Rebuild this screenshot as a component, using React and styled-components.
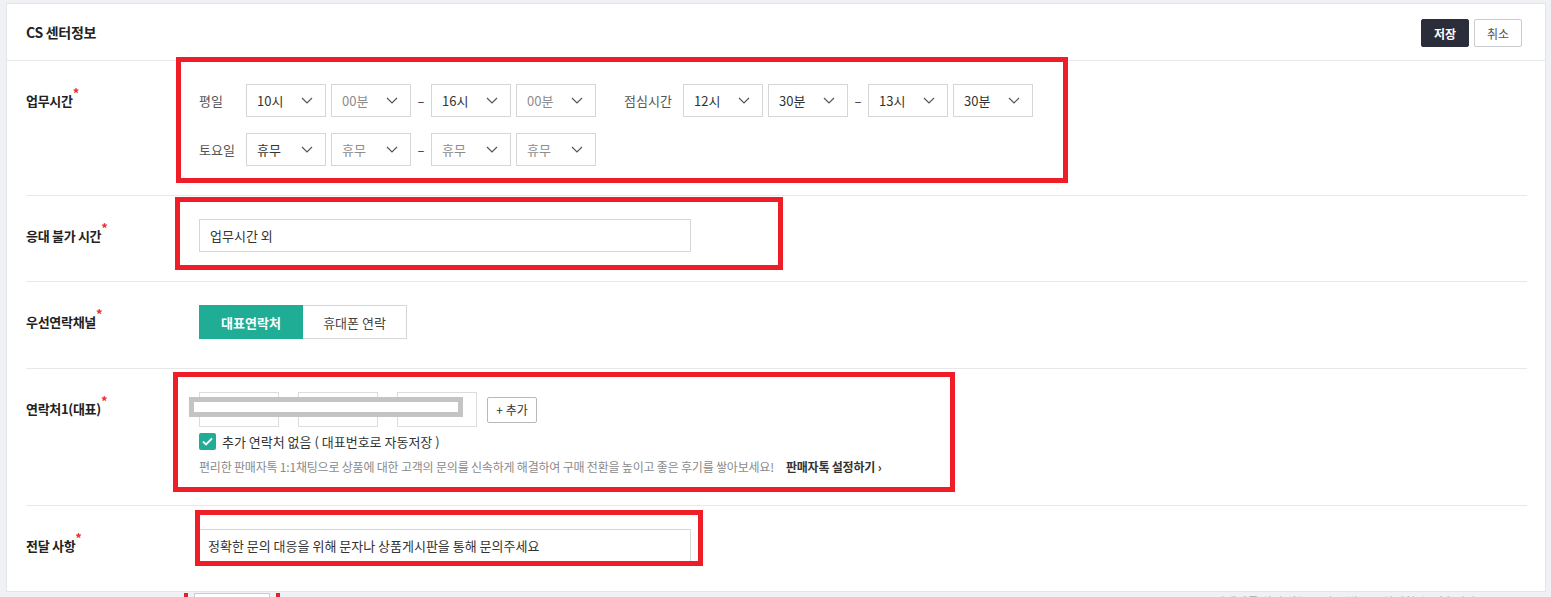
import React from 'react';
import styled, { createGlobalStyle } from 'styled-components';

const GlobalStyle = createGlobalStyle`
  html, body {
    margin: 0;
    padding: 0;
    background: #eff1f4;
    height: 597px;
    overflow: hidden;
  }
  body {
    font-family: "Noto Sans CJK KR", "Noto Sans", sans-serif;
    color: #333;
  }
`;

const Page = styled.div`
  padding: 3px 5px 0 6px;
`;

const Card = styled.section`
  position: relative;
  background: #fff;
  border: 1px solid #e3e5e8;
  height: 587px;
`;

const Header = styled.header`
  height: 56px;
  border-bottom: 1px solid #e8e9eb;
  display: flex;
  align-items: center;
  justify-content: space-between;
  padding: 0 23px 0 19px;
`;

const Title = styled.h1`
  margin: 0;
  font-size: 14px;
  font-weight: 700;
  color: #222;
  letter-spacing: -0.3px;
`;

const ButtonGroup = styled.div`
  display: flex;
  gap: 5px;
  margin-top: 2px;
`;

const HeaderButton = styled.button`
  width: 48px;
  height: 28px;
  border-radius: 2px;
  font-family: inherit;
  font-size: 12px;
  cursor: pointer;
  border: 1px solid ${p => (p.$primary ? '#2b2d3b' : '#c9cbcf')};
  background: ${p => (p.$primary ? '#2b2d3b' : '#fff')};
  color: ${p => (p.$primary ? '#fff' : '#555')};
  font-weight: ${p => (p.$primary ? 700 : 400)};
`;

const Body = styled.div`
  padding: 0 18px 0 19px;
`;

const Row = styled.div`
  display: flex;
  padding: 23px 0 29px;
  border-bottom: ${p => (p.$last ? 'none' : '1px solid #e7e8ea')};
`;

const Label = styled.div`
  width: 173px;
  flex: none;
  height: 33px;
  display: flex;
  align-items: center;
  font-size: 13px;
  font-weight: 700;
  color: #222;
  letter-spacing: -0.3px;
`;

const Star = styled.span`
  color: #e8312f;
  font-size: 13px;
  align-self: flex-start;
  margin-top: 2px;
  line-height: 13px;
`;

const Content = styled.div`
  display: flex;
  flex-direction: column;
  gap: ${p => p.$gap || 0}px;
`;

const Line = styled.div`
  display: flex;
  align-items: center;
  gap: 5px;
`;

const DayLabel = styled.span`
  width: ${p => p.$w}px;
  margin-left: ${p => p.$ml || 0}px;
  margin-right: -5px;
  flex: none;
  font-size: 13px;
  color: #555;
`;

const SelectBox = styled.div`
  width: 80px;
  height: 33px;
  box-sizing: border-box;
  border: 1px solid #d6d6d6;
  display: flex;
  align-items: center;
  justify-content: space-between;
  padding: 0 12px 0 10px;
  font-size: 13px;
  color: ${p => (p.$muted ? '#8c8c8c' : '#333')};
  background: #fff;
`;

const Dash = styled.span`
  width: 10px;
  text-align: center;
  font-size: 13px;
  color: #333;
`;

const TextInput = styled.div`
  width: ${p => p.$w}px;
  height: 33px;
  box-sizing: border-box;
  border: 1px solid #d6d6d6;
  display: flex;
  align-items: center;
  padding: 0 10px;
  font-size: 13px;
  color: #333;
  margin-left: ${p => p.$ml || 0}px;
`;

const Segmented = styled.div`
  display: flex;
`;

const SegButton = styled.button`
  width: 104px;
  height: 34px;
  font-family: inherit;
  font-size: 13px;
  border: 1px solid ${p => (p.$active ? '#20ad96' : '#d6d6d6')};
  border-left-width: ${p => (p.$active ? 1 : 0)}px;
  background: ${p => (p.$active ? '#20ad96' : '#fff')};
  color: ${p => (p.$active ? '#fff' : '#444')};
  font-weight: ${p => (p.$active ? 700 : 400)};
  padding: 0;
`;

const PhoneLine = styled.div`
  display: flex;
  align-items: center;
  gap: 19px;
`;

const PhoneInput = styled.div`
  width: 80px;
  height: 35px;
  box-sizing: border-box;
  border: 1px solid #dcdcdc;
`;

const AddButton = styled.button`
  margin-left: -9px;
  width: 50px;
  height: 26px;
  border: 1px solid #b8b8b8;
  border-radius: 2px;
  background: #fff;
  font-family: inherit;
  font-size: 12px;
  color: #333;
  padding: 0;
`;

const CheckLine = styled.label`
  margin-top: 6px;
  display: flex;
  align-items: center;
  gap: 6px;
  font-size: 13px;
  color: #333;
  height: 17px;
`;

const CheckBox = styled.span`
  width: 17px;
  height: 17px;
  border-radius: 2px;
  background: #20ad96;
  display: flex;
  align-items: center;
  justify-content: center;
`;

const Helper = styled.p`
  margin: 8px 0 0;
  font-size: 12px;
  line-height: 18px;
  color: #8a8a8a;
  letter-spacing: -0.2px;
`;

const HelperLink = styled.a`
  margin-left: 12px;
  font-weight: 700;
  color: #333;
  text-decoration: none;
`;

const Mark = styled.div`
  position: absolute;
  left: ${p => p.$x}px;
  top: ${p => p.$y}px;
  width: ${p => p.$w}px;
  height: ${p => p.$h}px;
  box-sizing: border-box;
  border: 5px solid #ee1d27;
  pointer-events: none;
`;

const Redact = styled.div`
  position: absolute;
  left: 182px;
  top: 393px;
  width: 274px;
  height: 20px;
  box-sizing: border-box;
  border: 5px solid #c4c4c4;
  background: #fff;
`;

const Below = styled.div`
  display: flex;
  justify-content: space-between;
  padding: 1px 70px 0 178px;
`;

const BelowBox = styled.div`
  border-left: 4px solid #ee1d27;
  border-right: 4px solid #ee1d27;
  padding: 0 6px;
`;

const BelowButton = styled.div`
  width: 74px;
  height: 20px;
  border: 1px solid #ccc;
  background: #fff;
  font-size: 12px;
  text-align: center;
  color: #555;
`;

const BelowText = styled.span`
  font-size: 12px;
  color: #aaa;
`;

const Chevron = () => (
  <svg width="12" height="7" viewBox="0 0 12 7" fill="none">
    <path d="M1 1l5 5 5-5" stroke="#555" strokeWidth="1.2" />
  </svg>
);

const Select = ({ value, muted }) => (
  <SelectBox $muted={muted}>
    <span>{value}</span>
    <Chevron />
  </SelectBox>
);

const FieldLabel = ({ children }) => (
  <Label>
    {children}
    <Star>*</Star>
  </Label>
);

export default function App() {
  return (
    <>
      <GlobalStyle />
      <Page>
        <Card>
          <Header>
            <Title>CS 센터정보</Title>
            <ButtonGroup>
              <HeaderButton $primary>저장</HeaderButton>
              <HeaderButton>취소</HeaderButton>
            </ButtonGroup>
          </Header>
          <Body>
            <Row>
              <FieldLabel>업무시간</FieldLabel>
              <Content $gap={16}>
                <Line>
                  <DayLabel $w={47}>평일</DayLabel>
                  <Select value="10시" />
                  <Select value="00분" muted />
                  <Dash>–</Dash>
                  <Select value="16시" />
                  <Select value="00분" muted />
                  <DayLabel $w={59} $ml={23}>점심시간</DayLabel>
                  <Select value="12시" />
                  <Select value="30분" />
                  <Dash>–</Dash>
                  <Select value="13시" />
                  <Select value="30분" />
                </Line>
                <Line>
                  <DayLabel $w={47}>토요일</DayLabel>
                  <Select value="휴무" />
                  <Select value="휴무" muted />
                  <Dash>–</Dash>
                  <Select value="휴무" muted />
                  <Select value="휴무" muted />
                </Line>
              </Content>
            </Row>
            <Row>
              <FieldLabel>응대 불가 시간</FieldLabel>
              <TextInput $w={492}>업무시간 외</TextInput>
            </Row>
            <Row>
              <FieldLabel>우선연락채널</FieldLabel>
              <Segmented>
                <SegButton $active>대표연락처</SegButton>
                <SegButton>휴대폰 연락</SegButton>
              </Segmented>
            </Row>
            <Row>
              <FieldLabel>연락처1(대표)</FieldLabel>
              <Content>
                <PhoneLine>
                  <PhoneInput />
                  <PhoneInput />
                  <PhoneInput />
                  <AddButton>+ 추가</AddButton>
                </PhoneLine>
                <CheckLine>
                  <CheckBox>
                    <svg width="11" height="9" viewBox="0 0 11 9" fill="none">
                      <path d="M1 4.5l3 3 6-6" stroke="#fff" strokeWidth="1.8" />
                    </svg>
                  </CheckBox>
                  추가 연락처 없음 ( 대표번호로 자동저장 )
                </CheckLine>
                <Helper>
                  편리한 판매자톡 1:1채팅으로 상품에 대한 고객의 문의를 신속하게 해결하여 구매 전환을 높이고 좋은 후기를 쌓아보세요!
                  <HelperLink href="#">판매자톡 설정하기 ›</HelperLink>
                </Helper>
              </Content>
            </Row>
            <Row $last>
              <FieldLabel>전달 사항</FieldLabel>
              <TextInput $w={494} $ml={-2}>정확한 문의 대응을 위해 문자나 상품게시판을 통해 문의주세요</TextInput>
            </Row>
          </Body>
          <Mark $x={169} $y={53} $w={892} $h={126} />
          <Mark $x={168} $y={193} $w={608} $h={73} />
          <Mark $x={166} $y={368} $w={782} $h={120} />
          <Mark $x={188} $y={506} $w={508} $h={56} />
          <Redact />
        </Card>
        <Below>
          <BelowBox>
            <BelowButton>확인</BelowButton>
          </BelowBox>
          <BelowText>판매자톡 상담 가능 시간은 별도로 설정할 수 있습니다</BelowText>
        </Below>
      </Page>
    </>
  );
}
